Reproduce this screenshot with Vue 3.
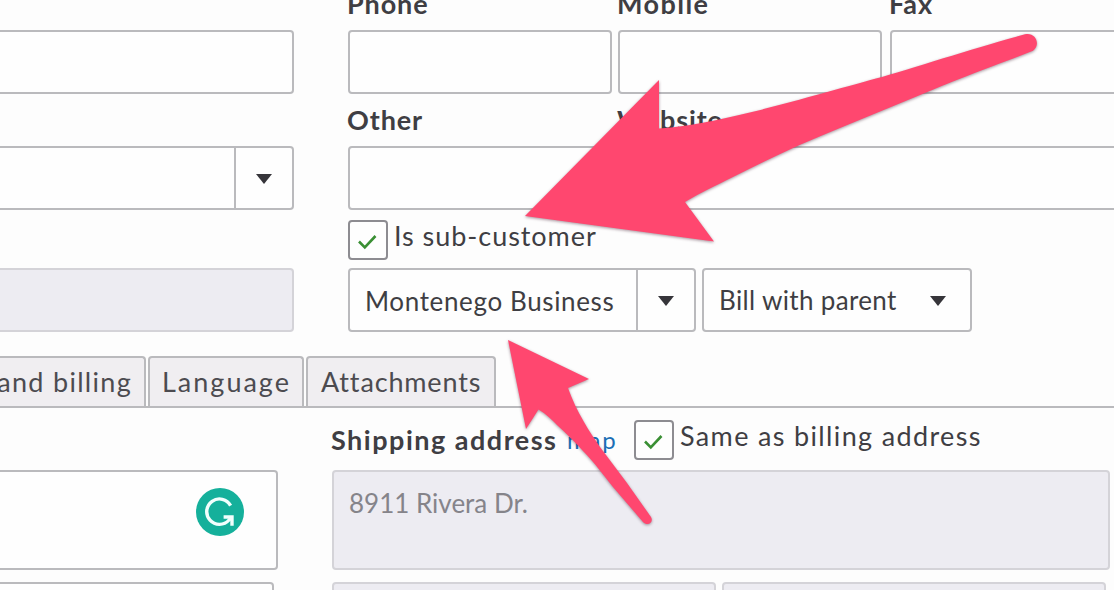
<template>
  <div class="page">
    <section class="details">
      <div class="col-left">
        <div class="field open-left"></div>
        <div class="field open-left combo second">
          <span class="combo-btn"><i class="caret"></i></span>
        </div>
        <div class="field open-left disabled third"></div>
      </div>

      <div class="col-right">
        <div class="phones">
          <div v-for="p in phones" :key="p.name">
            <label class="label" :class="p.cls">{{ p.name }}</label>
            <div class="field"></div>
          </div>
        </div>
        <div class="contacts">
          <div>
            <label class="label">Other</label>
            <div class="field"></div>
          </div>
          <div>
            <label class="label">Website</label>
            <div class="field"></div>
          </div>
        </div>
        <div class="check-row">
          <span class="checkbox">
            <svg viewBox="0 0 36 36"><path d="M9 19.5l5.8 5.8L25.5 14" /></svg>
          </span>
          <span class="check-text sub">Is sub-customer</span>
        </div>
        <div class="parent-row">
          <div class="field combo parent">
            <span class="value montenego">Montenego Business</span>
            <span class="combo-btn"><i class="caret"></i></span>
          </div>
          <div class="field bill">
            <span class="value with-parent">Bill with parent</span>
            <i class="caret"></i>
          </div>
        </div>
      </div>
    </section>

    <nav class="tabs">
      <span class="tab billing"><span>and billing</span></span>
      <span class="tab language"><span>Language</span></span>
      <span class="tab attachments"><span>Attachments</span></span>
    </nav>

    <section class="addresses">
      <div class="billing-col">
        <div class="field open-left area">
          <svg class="grammar" viewBox="0 0 48 48">
            <circle cx="24" cy="24" r="24" fill="#15b09b" />
            <path d="M34.6 17.6A12.7 12.7 0 1 0 33 32L36 29.5" />
            <path d="M27.6 29H36V37.8" />
          </svg>
        </div>
        <div class="field open-left next"></div>
      </div>
      <div class="shipping-col">
        <div class="ship-head">
          <span class="ship-title">Shipping address</span>
          <a class="map">map</a>
          <span class="checkbox">
            <svg viewBox="0 0 36 36"><path d="M9 19.5l5.8 5.8L25.5 14" /></svg>
          </span>
          <span class="check-text same">Same as billing address</span>
        </div>
        <div class="field disabled area street"><span>8911 Rivera Dr.</span></div>
        <div class="city-row">
          <div class="field disabled"></div>
          <div class="field disabled"></div>
        </div>
      </div>
    </section>

    <!-- Annotation arrows -->
    <svg class="arrows" viewBox="0 0 1114 590">
      <path
        d="M525 216L659 80V128.5C685 127 715 121 753 111.7C800 100 850 85.5 882 77C920 66 985 45 1025 34.3C1036 32 1041 45 1033 50.7C1000 64 965 76 928 91.7L843 126.7C805 142 770 158 733 177C715 186 700 193 685 202L714 241.5Z"
      />
      <path
        d="M508 340L589 379L568 388C572 399 577 410 584 422C589 431 594 438 600 447L627 483L651 517C654 522 648 527 643 522L613 487C604 476 594 462 583 451C575 442 566 433 557 425C552 420 546 414 538.5 409.5L526 429Z"
      />
    </svg>
  </div>
</template>

<script setup>
const phones = [
  { name: 'Phone', cls: 'phone' },
  { name: 'Mobile', cls: 'mobile' },
  { name: 'Fax', cls: 'fax' }
]
</script>

<style>
body {
  background: #fdfdfd;
}
</style>

<style scoped>
.page {
  position: relative;
  width: 1114px;
  height: 590px;
  overflow: hidden;
  background: #fdfdfd;
  color: #3f3e43;
  font-family: Lato, "Liberation Sans", sans-serif;
  font-size: 26px;
  font-variant-ligatures: none;
  white-space: nowrap;
}

.page * {
  box-sizing: border-box;
}

.field {
  height: 64px;
  border: 2px solid #bababd;
  border-radius: 4px;
  background: #fefefe;
}

.field.open-left {
  border-left: 0;
  border-radius: 0 4px 4px 0;
}

.field.disabled {
  background: #edecf2;
  border-color: #d4d3d8;
}

.details {
  display: flex;
  gap: 54px;
  height: 356px;
}

.col-left {
  flex: none;
  width: 294px;
  padding-top: 30px;
}

.second {
  margin-top: 52px;
}

.third {
  margin-top: 58px;
}

.combo {
  display: flex;
  justify-content: flex-end;
}

.combo-btn {
  display: flex;
  flex: none;
  align-items: center;
  justify-content: center;
  width: 58px;
  border-left: 2px solid #bababd;
}

.caret {
  width: 0;
  height: 0;
  margin-top: 2px;
  border: 8px solid transparent;
  border-top: 10px solid #36353a;
  border-bottom: 0;
}

.col-right {
  width: 850px;
  flex: none;
  margin-top: -22px;
}

.phones {
  display: grid;
  grid-template-columns: 264px 264px 300px;
  column-gap: 6px;
}

.phones > :last-child {
  margin-left: 2px;
}

.contacts {
  display: grid;
  grid-template-columns: 264px 560px;
  column-gap: 6px;
}

.label {
  display: block;
  height: 52px;
  line-height: 52px;
  font-size: 27px;
  font-weight: 700;
  letter-spacing: 0.9px;
  margin-left: -1px;
}

.mobile {
  letter-spacing: 1.4px;
}

.check-row {
  display: flex;
  height: 58px;
  padding-top: 10px;
}

.checkbox {
  flex: none;
  width: 40px;
  height: 40px;
  border: 2px solid #8d8c91;
  border-radius: 4px;
  background: #fefefe;
}

.checkbox svg {
  display: block;
  width: 36px;
  height: 36px;
}

.checkbox path {
  fill: none;
  stroke: #3a8f34;
  stroke-width: 2.6;
}

.check-text {
  font-size: 27px;
  line-height: 52px;
  margin: -10px 0 0 6px;
}

.sub {
  letter-spacing: 0.95px;
}

.same {
  letter-spacing: 1.35px;
}

.parent-row {
  display: flex;
  gap: 6px;
}

.parent {
  width: 348px;
}

.value {
  padding-left: 15px;
  line-height: 62px;
}

.montenego {
  flex: 1;
  letter-spacing: 0.63px;
}

.with-parent {
  letter-spacing: 0.35px;
}

.bill {
  display: flex;
  align-items: center;
  justify-content: space-between;
  width: 270px;
  padding-right: 24px;
}

.tabs {
  display: flex;
  gap: 2px;
  height: 52px;
  border-bottom: 2px solid #bababd;
}

.tab {
  height: 50px;
  border: 2px solid #bababd;
  border-bottom: 0;
  border-radius: 4px 4px 0 0;
  background: #f0eef1;
  color: #4c4b50;
  font-size: 27px;
  line-height: 48px;
  padding-left: 12px;
}

.tab.billing {
  width: 146px;
  border-left: 0;
  border-top-left-radius: 0;
  padding-left: 0;
  display: flex;
  justify-content: flex-end;
  padding-right: 12px;
  letter-spacing: 1.3px;
}

.tab.language {
  width: 156px;
  letter-spacing: 2px;
}

.tab.attachments {
  width: 190px;
  padding-left: 13px;
  letter-spacing: 0.85px;
}

.addresses {
  display: flex;
  gap: 54px;
}

.billing-col {
  width: 278px;
  padding-top: 62px;
}

.area {
  height: 100px;
}

.grammar {
  display: block;
  width: 48px;
  height: 48px;
  margin: 16px 0 0 196px;
}

.grammar path {
  fill: none;
  stroke: #f2fffd;
  stroke-width: 3.4;
}

.next {
  width: 274px;
  margin-top: 12px;
}

.shipping-col {
  width: 778px;
}

.ship-head {
  display: flex;
  height: 62px;
  line-height: 64px;
}

.ship-head .checkbox {
  margin: 12px 0 0 18px;
}

.ship-head .check-text {
  line-height: 56px;
  margin-top: 0;
}

.ship-title {
  width: 236px;
  margin-left: -1px;
  font-size: 27px;
  font-weight: 700;
  letter-spacing: 1.5px;
}

.map {
  width: 49px;
  color: #1c6fb5;
  font-size: 24px;
  letter-spacing: 1.8px;
}

.street {
  padding-left: 15px;
  color: #85848a;
  line-height: 62px;
}

.city-row {
  display: grid;
  grid-template-columns: 384px 384px;
  gap: 6px;
  margin-top: 12px;
}

.arrows {
  position: absolute;
  inset: 0;
  width: 1114px;
  height: 590px;
  fill: #ff476f;
  filter: drop-shadow(0 1px 1.5px rgba(60, 20, 40, 0.45));
}
</style>
